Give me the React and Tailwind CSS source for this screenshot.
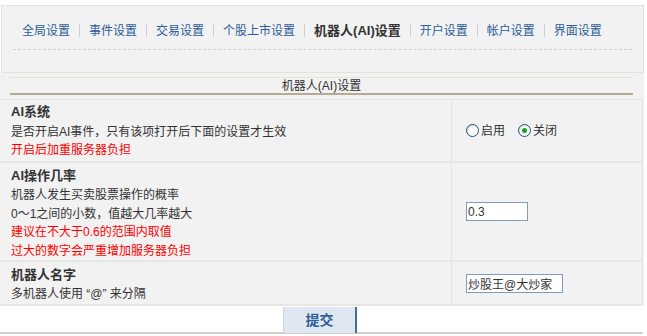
const NAV = ['全局设置', '事件设置', '交易设置', '个股上市设置', '机器人(AI)设置', '开户设置', '帐户设置', '界面设置']
const ACTIVE = '机器人(AI)设置'

function Radio({ checked, label }) {
  return (
    <label className="flex items-center gap-[2px]">
      <span className="w-[13px] h-[13px] rounded-full border border-[#1c5180] bg-white flex items-center justify-center shadow-[inset_1px_1px_1px_rgba(0,0,0,0.15)]">
        {checked && <span className="w-[5px] h-[5px] rounded-full bg-[#21a121]" />}
      </span>
      <span>{label}</span>
    </label>
  )
}

export default function App() {
  return (
    <div className="w-[647px] h-[336px] bg-white text-[12px] text-[#333] font-['Liberation_Sans','Noto_Sans_CJK_SC',sans-serif] overflow-hidden">
      <div className="w-[644px] pt-[5px] bg-white">
        {/* nav box */}
        <div className="ml-[1px] w-[643px] h-[68px] border border-[#e2e2e0] bg-[#f2f2f2] px-[11px]">
          <div className="flex items-center h-[43px] pt-[6px] pl-[9px]">
            {NAV.map((n, i) => (
              <div key={n} className="flex items-center">
                {n === ACTIVE
                  ? <span className="font-bold text-[13px] text-[#333]">{n}</span>
                  : <span className="text-[#2a5d98]">{n}</span>}
                {i < NAV.length - 1 && <span className="w-px h-[13px] bg-[#d0d0d0] mx-[9px]" />}
              </div>
            ))}
          </div>
          <div className="border-t border-dashed border-[#cfcfcf]" />
        </div>

        {/* content */}
        <div className="bg-[#f2f2f2] pt-[4px]">
          <div className="mx-[10px] w-[623px] border-t border-[#e6e3d8] border-b-2 border-b-[#b3ab92] h-[18px] flex items-center justify-center leading-none">
            机器人(AI)设置
          </div>
          <div className="mt-[4px] w-[643px] border-t border-r border-[#e3e3e0]">
            <div className="flex border-b-2 border-[#e6e6e2] h-[63px]">
              <div className="w-[452px] border-r border-[#e3e3e0] pl-[11px] pt-[1px] leading-[17.5px]">
                <div className="font-bold text-[13px] leading-[22px] pb-[1px]">AI系统</div>
                <div>是否开启AI事件，只有该项打开后下面的设置才生效</div>
                <div className="text-[#ff0000]">开启后加重服务器负担</div>
              </div>
              <div className="flex-1 flex items-center pl-[14px] gap-[13px]">
                <Radio label="启用" />
                <Radio checked label="关闭" />
              </div>
            </div>
            <div className="flex border-b-2 border-[#e6e6e2] h-[99px]">
              <div className="w-[452px] border-r border-[#e3e3e0] pl-[11px] pt-[3px] leading-[18.5px]">
                <div className="font-bold text-[13px] leading-[20px]">AI操作几率</div>
                <div>机器人发生买卖股票操作的概率</div>
                <div>0～1之间的小数，值越大几率越大</div>
                <div className="text-[#ff0000]">建议在不大于0.6的范围内取值</div>
                <div className="text-[#ff0000]">过大的数字会严重增加服务器负担</div>
              </div>
              <div className="flex-1 flex items-center pl-[14px]">
                <input
                  defaultValue="0.3"
                  className="w-[62px] h-[19px] border border-[#7f9db9] bg-white px-[1px] text-[12px] text-[#333] outline-none"
                />
              </div>
            </div>
            <div className="flex border-b-2 border-[#e6e6e2] h-[44px]">
              <div className="w-[452px] border-r border-[#e3e3e0] pl-[11px] pt-[3px] leading-[19px]">
                <div className="font-bold text-[13px] leading-[20px]">机器人名字</div>
                <div>多机器人使用 “@” 来分隔</div>
              </div>
              <div className="flex-1 flex items-center pl-[14px]">
                <input
                  defaultValue="炒股王@大炒家"
                  className="w-[97px] h-[19px] border border-[#7f9db9] bg-white px-[1px] text-[12px] text-[#333] outline-none"
                />
              </div>
            </div>
          </div>
        </div>

        {/* submit */}
        <div className="h-[28px] flex justify-center border-b-2 border-[#cfcfcf] w-[643px]">
          <button className="ml-[-3px] w-[74px] h-[26px] mt-[1px] bg-[#dfe8f1] border-l border-[#c9d6e3] border-r-2 border-r-[#3b6da3] text-[14px] font-bold text-[#2c5e97]">
            提交
          </button>
        </div>
      </div>
    </div>
  )
}
